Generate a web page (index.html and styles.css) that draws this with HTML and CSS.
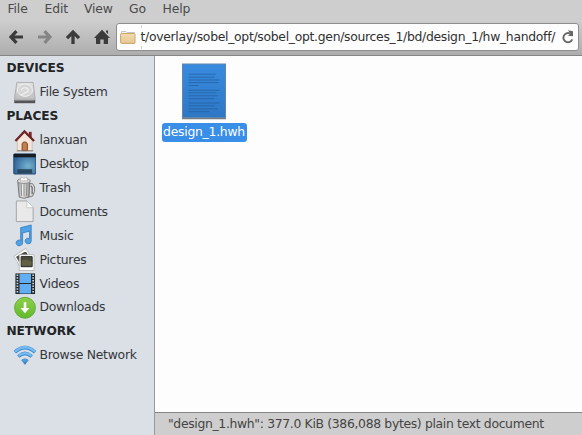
FILE: index.html
```html
<!DOCTYPE html>
<html lang="en">
<head>
<meta charset="utf-8">
<title>hw_handoff</title>
<link rel="stylesheet" href="styles.css">
</head>
<body>
<svg width="0" height="0" class="defs" aria-hidden="true">
  <defs>
    <linearGradient id="silver" x2="0" y2="1"><stop stop-color="#e2e2e2"/><stop offset="1" stop-color="#b5b5b5"/></linearGradient>
    <linearGradient id="can" x2="1" y2="0"><stop stop-color="#999"/><stop offset=".4" stop-color="#eee"/><stop offset="1" stop-color="#999"/></linearGradient>
    <linearGradient id="blue" x2="0" y2="1"><stop stop-color="#65b5ed"/><stop offset="1" stop-color="#2874be"/></linearGradient>
    <radialGradient id="desk" cx=".65" cy=".6" r=".7"><stop stop-color="#75b3d0"/><stop offset="1" stop-color="#2e5f95"/></radialGradient>
    <linearGradient id="green" x2="0" y2="1"><stop stop-color="#8ed04a"/><stop offset="1" stop-color="#62b92b"/></linearGradient>
    <linearGradient id="folder" x2="0" y2="1"><stop stop-color="#f2dbb2"/><stop offset="1" stop-color="#e6c78f"/></linearGradient>
    <linearGradient id="page" x2="0" y2="1"><stop stop-color="#398be0"/><stop offset="1" stop-color="#2e77c5"/></linearGradient>
  </defs>
</svg>
<div class="window">
  <header class="chrome">
    <nav class="menu"><span class="m-file">File</span><span class="m-edit">Edit</span><span class="m-view">View</span><span class="m-go">Go</span><span class="m-help">Help</span></nav>
    <div class="toolbar">
      <svg class="nav" viewBox="0 0 16 16"><path d="M8.500 2.200 3 8l5.500 5.800M3.500 8H15" fill="none" stroke="#3b3b3b" stroke-width="3.200"/></svg>
      <svg class="nav" viewBox="0 0 16 16"><path d="M7.500 2.200 13 8l-5.500 5.800M12.500 8H1" fill="none" stroke="#858585" stroke-width="3.200"/></svg>
      <svg class="nav" viewBox="0 0 16 16"><path d="M2 9.200 8 3.200l6 6M8 3.500V15" fill="none" stroke="#3b3b3b" stroke-width="3.300"/></svg>
      <svg class="nav" viewBox="0 0 16 16"><path d="M8 .8 16 9H14v6H9.700v-4.500H6.300V15H2V9H0Z M12 1.500h2V5l-2-2Z" fill="#3b3b3b"/></svg>
      <div class="path">
        <svg class="folder" viewBox="0 0 16 14"><path d="M1.500 4V1.500H6L7 2.500h7.500V4" fill="#fafafa" stroke="#c6c6c6"/><rect x=".6" y="3.500" width="14.400" height="9.900" rx=".8" fill="url(#folder)" stroke="#c9a66d"/></svg>
        <span class="path-text">t/overlay/sobel_opt/sobel_opt.gen/sources_1/bd/design_1/hw_handoff/</span>
        <svg class="reload" viewBox="0 0 12 14"><path d="M10.300 9.300A4.600 4.600 0 1 1 8 3.500" fill="none" stroke="#666" stroke-width="1.900"/><path d="M6 .3 11 1.200v5L5.800 5.800 8.300 3.700Z" fill="#666"/></svg>
      </div>
    </div>
  </header>
  <aside class="sidebar">
    <h2>DEVICES</h2>
    <div class="row"><svg viewBox="0 0 24 24"><path d="M4 1.500h17l2 17v4.500H1.500v-4.500Z" fill="url(#silver)" stroke="#999" stroke-width=".7"/><ellipse cx="12.500" cy="9.500" rx="7.800" ry="6.500" fill="#d6d6d6" stroke="#f1f1f1"/><path d="M9 10a3.500 2.500 0 1 1 4 2l-5 3" fill="none" stroke="#f3f3f3" stroke-width="1.200"/><path d="M1.500 20H23v3H1.500Z" fill="#555"/><path d="M2 20h20" stroke="#999"/></svg><span>File System</span></div>
    <h2>PLACES</h2>
    <div class="row"><svg viewBox="0 0 24 24"><path d="M16.500 3h3v6h-3Z" fill="#7b292b"/><path d="M4.500 11 12 3.500l8 7.500v11.500h-15.500Z" fill="#f6e6d9" stroke="#b9a99c" stroke-width=".6"/><path d="M2.500 12.500 12 2.500l10 10" fill="none" stroke="#702427" stroke-width="2.400"/><path d="M9.500 22.500V15.500a2.800 2.500 0 0 1 5.500 0v7Z" fill="#c57d4c" stroke="#744626"/><path d="M4 22.800h17" stroke="#8d7567"/></svg><span>lanxuan</span></div>
    <div class="row"><svg viewBox="0 0 24 24"><rect x=".8" y="2" width="23" height="21" rx=".8" fill="url(#desk)" stroke="#244a73"/><path d="M.8 2h23v3.500h-23Z" fill="#151c23"/><path d="M4.500 18h15.500v4.500h-15.500Z" fill="#29475f"/></svg><span>Desktop</span></div>
    <div class="row"><svg viewBox="0 0 24 24"><path d="M17 8h3.500q3 3 2 8l-2 5-4 1Z" fill="#ddd" stroke="#777"/><path d="m18.500 10 1.500 2v7" fill="none" stroke="#777" stroke-width="1.500"/><path d="M5 6h12.500l-1 16q-5 2.500-10 0Z" fill="url(#can)" stroke="#777"/><path d="M8.500 8l.5 13M11.500 8v13.500M14.500 8 14 21" stroke="#8b8b8b"/><ellipse cx="11.300" cy="5.200" rx="6.800" ry="2.600" fill="#ddd" stroke="#888"/><path d="m7.500 5 1-4 3 1.500L14 1l1.500 4Z" fill="#fff" stroke="#aaa" stroke-width=".7"/></svg><span>Trash</span></div>
    <div class="row"><svg viewBox="0 0 24 24"><path d="M3.500 1h11l6.500 7v14.500H3.500Z" fill="#e9e9e9" stroke="#a4a4a4"/><path d="M14.500 1v7H21" fill="#fff" stroke="#b5b5b5" stroke-width=".7"/></svg><span>Documents</span></div>
    <div class="row"><svg viewBox="0 0 24 24"><path d="M8 3.800 19 1v17a3.200 2.800 0 1 1-1.800-2.700V7.500L10 9.300v10.500A3.400 3 0 1 1 8 17Z" fill="#50a2e6" stroke="#3277b6" stroke-width=".8"/></svg><span>Music</span></div>
    <div class="row"><svg viewBox="0 0 24 24"><path d="m2 9 11.500-7 6 10L8 19Z" fill="#4d4f43" stroke="#fff" stroke-width="1.800"/><path d="m.8 8.500 12.700-8 6.500 11L8 20.500Z" fill="none" stroke="#999" stroke-width=".6"/><path d="M6.500 7h15.500v16.500H6.500Z" fill="#fff" stroke="#999" stroke-width=".6"/><path d="M8.500 9h11.500v10.500H8.500Z" fill="#4d4c3d" stroke="#242420"/><path d="m9 13 5-1 5.500 2v4.500H9Z" fill="#626045"/></svg><span>Pictures</span></div>
    <div class="row"><svg viewBox="0 0 24 24"><path d="M2.500 1.500h20.500v21.500H2.500Z" fill="#252a2d"/><path d="M6.800 2h12v9.500h-12Zm0 10.500h12V22.500h-12Z" fill="#62aef3"/><path d="M4.600 2.500v20M21 2.500v20" stroke="#ccd0d2" stroke-width="1.800" stroke-dasharray="1.600 1.300"/></svg><span>Videos</span></div>
    <div class="row"><svg viewBox="0 0 24 24"><circle cx="12.500" cy="12.300" r="10.900" fill="url(#green)" stroke="#65a93b"/><path d="M11.200 6.500h2.700v6h3.300l-4.700 5.500-4.700-5.500h3.400Z" fill="#fff"/></svg><span>Downloads</span></div>
    <h2>NETWORK</h2>
    <div class="row"><svg viewBox="0 0 24 24"><path d="M2 8.500Q12.500-1 23 8.500M5.500 13q7-6.500 14 0" fill="none" stroke="#3583cc" stroke-width="3.600"/><path d="M2.300 8Q12.500-1.200 22.700 8M5.800 12.500q6.700-6 13.400 0" fill="none" stroke="#75bdf2" stroke-width="2.400"/><path d="M9 16.800q3.500-3 7 0l-3.500 4.500Z" fill="url(#blue)" stroke="#2874be" stroke-width=".6"/></svg><span>Browse Network</span></div>
  </aside>
  <main class="files">
    <div class="file">
      <svg class="doc" viewBox="0 0 46 57"><path d="M1 55.300h44" stroke="#747c84" stroke-width="1.800"/><rect x="1.500" y="1" width="43" height="53.500" fill="url(#page)" stroke="#6386a9"/><path d="M7.500 11.200h27M7.500 14.200h26M7.500 17h31M7.500 19.600h30M7.500 22.500h10M7.500 27.300h31M7.500 29.800h28M7.500 32.800h29M7.500 35.700h26M7.500 40h31M7.500 42.800h26M7.500 45.800h29M7.500 48.700h21" stroke="#205996" stroke-width=".75" stroke-opacity=".85"/></svg>
      <span class="label">design_1.hwh</span>
    </div>
  </main>
  <footer class="status"><span>"design_1.hwh": 377.0 KiB (386,088 bytes) plain text document</span></footer>
</div>
</body>
</html>
```
FILE: styles.css
```css
* { box-sizing: border-box; }
body {
  margin: 0;
  font: 12.4px/18px "DejaVu Sans", sans-serif;
  letter-spacing: -0.26px;
  color: #34373a;
  overflow: hidden;
}
.defs { position: absolute; }
.window {
  width: 582px;
  height: 435px;
  display: grid;
  grid-template: 56px 356px 23px / 155px 1fr;
}
.chrome {
  grid-column: 1 / 3;
  background: linear-gradient(#cecece 0 20px, #adadad 55px);
  border-bottom: 1px solid #858585;
}
.menu { height: 19px; display: flex; padding-left: 7.5px; color: #4a4a4a; letter-spacing: -0.15px; }
.menu span { white-space: nowrap; }
.m-file { width: 37px; }
.m-edit { width: 39.5px; }
.m-view { width: 45px; }
.m-go { width: 33.5px; }
.toolbar { display: flex; align-items: center; height: 36px; padding: 0 3px 0 8px; }
.nav { width: 16px; height: 16px; margin-right: 12.5px; flex: none; }
.path {
  flex: 1;
  min-width: 0;
  height: 28px;
  margin-left: -6px;
  background: #fdfdfd;
  border: 1px solid #8d8d8d;
  border-radius: 3px;
  display: flex;
  align-items: center;
  color: #303030;
  letter-spacing: -0.3px;
}
.folder { width: 16px; height: 14px; margin: 0 4.5px 0 3px; flex: none; }
.path-text { flex: 1; min-width: 0; white-space: nowrap; background: linear-gradient(#d4d4d4 0 3px, transparent 3px 21px, #d4d4d4 21px) 0 0 / 1px 100% no-repeat; line-height: 24px; }
.reload { width: 12px; height: 14px; margin-right: 4.5px; flex: none; }
.sidebar {
  grid-row: 2 / 4;
  background: #dbdfe6;
  border-right: 1px solid #99999d;
  padding: 0.4px 0 0 6.5px;
}
h2 { margin: 0; height: 23.92px; padding-top: 0.8px; font-size: 12.2px; line-height: 23.92px; letter-spacing: -0.08px; color: #222426; }
.row { display: flex; align-items: center; height: 23.92px; padding-left: 6px; gap: 4px; }
.row svg { width: 23px; height: 23px; flex: none; }
.files { background: #fdfdfd; padding: 6.5px 0 0 6.5px; }
.file { width: 85px; display: flex; flex-direction: column; align-items: center; }
.doc { width: 46px; height: 57px; display: block; margin-left: -1px; }
.label {
  width: 85px;
  height: 19.5px;
  margin-top: 3px;
  line-height: 18.5px;
  text-align: center;
  color: #fff;
  background: #398ee7;
  border-radius: 3px;
  white-space: nowrap;
}
.status {
  background: #cecece;
  border-top: 1px solid #858585;
  padding: 2px 0 0 13px;
  color: #444;
  letter-spacing: -0.33px;
  white-space: nowrap;
}
```
